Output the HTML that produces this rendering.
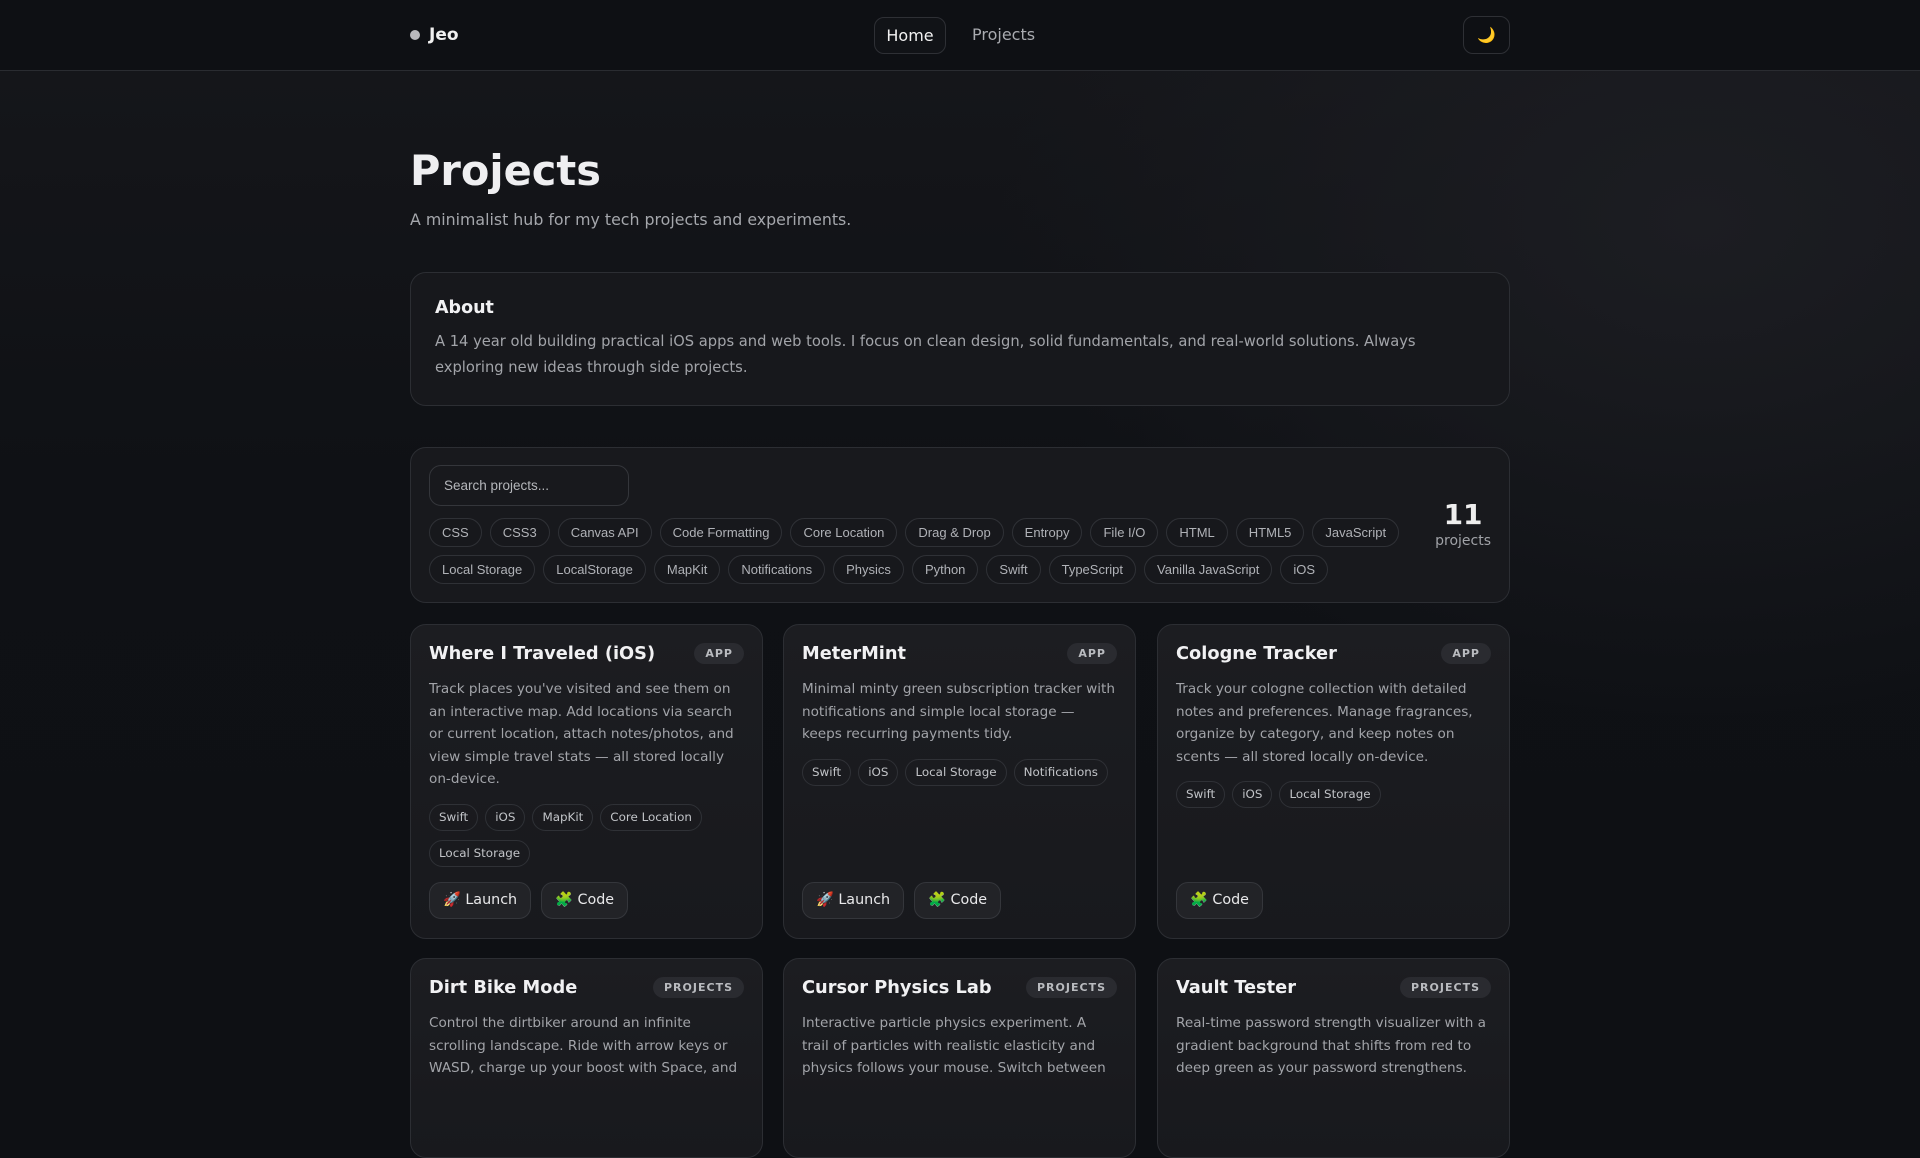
<!DOCTYPE html>
<html><head><meta charset="utf-8"><style>
*{box-sizing:border-box;margin:0;padding:0}
body{width:1920px;height:1080px;overflow:hidden;background:#0e1014;color:#e6e6e8;font-family:"DejaVu Sans","Liberation Sans",sans-serif;position:relative}
.bg{position:absolute;left:0;top:71px;width:1920px;height:1009px;background:radial-gradient(ellipse 700px 500px at 1700px 150px,#1c1d22 0%,rgba(20,21,25,0) 100%),linear-gradient(180deg,#15161a 0%,#0f1115 40%,#0e1014 100%)}
nav{position:absolute;left:0;top:0;width:1920px;height:71px;background:#0e1014;border-bottom:1px solid #2a2c31;z-index:2}
.logo{position:absolute;left:410px;top:25px;font-weight:bold;font-size:17px;color:#f0f0f0;display:flex;align-items:center}
.logo i{width:10px;height:10px;border-radius:50%;background:#b8b8bc;margin-right:9px;display:inline-block}
.home{position:absolute;left:874px;top:17px;width:72px;height:37px;border:1px solid #2e3035;border-radius:10px;font-size:16px;color:#f2f2f2;text-align:center;line-height:36px;background:#111317}
.proj{position:absolute;left:972px;top:25px;font-size:16px;color:#a9abb0}
.moon{position:absolute;left:1463px;top:16px;width:47px;height:38px;border:1px solid #2e3035;border-radius:10px;text-align:center;line-height:36px;font-size:15px;color:#f2b61d}
.wrap{position:absolute;left:410px;top:0;width:1100px;z-index:1}
h1{position:absolute;top:146px;left:0;font-size:41.5px;font-weight:bold;color:#efeff1}
.sub{position:absolute;top:210px;left:0;font-size:15.8px;color:#a5a7ac}
.about{position:absolute;top:272px;left:0;width:1100px;height:134px;border:1px solid #2c2e33;border-radius:16px;background:#17181c;padding:25px 24px}
.about h3{font-size:17.5px;font-weight:bold;color:#f1f1f3;margin-bottom:11px}
.about p{font-size:14.7px;line-height:26px;color:#a2a4a9}
.filter{position:absolute;top:447px;left:0;width:1100px;height:156px;border:1px solid #2c2e33;border-radius:16px;background:#18191d;padding:17px 18px}
.search{width:200px;height:41px;border:1px solid #34363b;border-radius:12px;font-family:"Liberation Sans",sans-serif;font-size:13.5px;color:#b5b7bb;padding:12px 14px;margin-bottom:12px}
.chips{width:1000px;display:flex;flex-wrap:wrap;gap:8px 8px}
.chip{height:29px;border:1px solid #2f3136;border-radius:15px;padding:0 12px;font-family:"Liberation Sans",sans-serif;font-size:13px;color:#b0b2b7;line-height:27px;background:#17181c}
.count{position:absolute;right:18px;top:52px;text-align:center}
.count b{display:block;font-size:28px;color:#eee;line-height:30px}
.count span{font-size:14px;color:#a0a2a7}
.card{position:absolute;width:353px;border:1px solid #2c2e33;border-radius:16px;background:linear-gradient(180deg,#1c1d21,#18191d);padding:18px 18px;overflow:hidden}
.card h2{font-size:17.8px;font-weight:bold;color:#f1f1f3;margin-top:0;height:24px}
.badge{position:absolute;right:18px;top:18px;height:21px;border-radius:11px;background:#2a2b30;color:#b9bbbf;font-size:11px;font-weight:bold;letter-spacing:1px;padding:0 11px;line-height:21px}
.card p{font-size:13.6px;line-height:22.5px;color:#a2a4a9;margin-top:11px}
.tags{display:flex;flex-wrap:wrap;gap:9px 7px;margin-top:13px}
.tag{height:27px;border:1px solid #2f3136;border-radius:14px;padding:0 9px;font-size:11.9px;color:#c2c4c8;line-height:25px;white-space:nowrap}
.btns{position:absolute;left:18px;top:257px;display:flex;gap:10px}
.btn{height:37px;border:1px solid #34363b;border-radius:12px;background:#222327;padding:0 13px;font-size:14.3px;color:#e8e8ea;line-height:35px}
</style></head><body>
<div class="bg"></div>
<nav>
<div class="logo"><i></i>Jeo</div>
<div class="home">Home</div>
<div class="proj">Projects</div>
<div class="moon">🌙</div>
</nav>
<div class="wrap">
<h1>Projects</h1>
<div class="sub">A minimalist hub for my tech projects and experiments.</div>
<div class="about"><h3>About</h3><p>A 14 year old building practical iOS apps and web tools. I focus on clean design, solid fundamentals, and real-world solutions. Always exploring new ideas through side projects.</p></div>
<div class="filter">
<div class="search">Search projects...</div>
<div class="chips">
<span class="chip">CSS</span><span class="chip">CSS3</span><span class="chip">Canvas API</span><span class="chip">Code Formatting</span><span class="chip">Core Location</span><span class="chip">Drag &amp; Drop</span><span class="chip">Entropy</span><span class="chip">File I/O</span><span class="chip">HTML</span><span class="chip">HTML5</span><span class="chip">JavaScript</span>
<span class="chip">Local Storage</span><span class="chip">LocalStorage</span><span class="chip">MapKit</span><span class="chip">Notifications</span><span class="chip">Physics</span><span class="chip">Python</span><span class="chip">Swift</span><span class="chip">TypeScript</span><span class="chip">Vanilla JavaScript</span><span class="chip">iOS</span>
</div>
<div class="count"><b>11</b><span>projects</span></div>
</div>

<div class="card" style="left:0;top:624px;height:315px"><h2>Where I Traveled (iOS)</h2><span class="badge">APP</span>
<p>Track places you've visited and see them on an interactive map. Add locations via search or current location, attach notes/photos, and view simple travel stats — all stored locally on-device.</p>
<div class="tags"><span class="tag">Swift</span><span class="tag">iOS</span><span class="tag">MapKit</span><span class="tag">Core Location</span><span class="tag">Local Storage</span></div>
<div class="btns"><span class="btn">🚀 Launch</span><span class="btn">🧩 Code</span></div></div>

<div class="card" style="left:373px;top:624px;height:315px"><h2>MeterMint</h2><span class="badge">APP</span>
<p>Minimal minty green subscription tracker with notifications and simple local storage — keeps recurring payments tidy.</p>
<div class="tags"><span class="tag">Swift</span><span class="tag">iOS</span><span class="tag">Local Storage</span><span class="tag">Notifications</span></div>
<div class="btns"><span class="btn">🚀 Launch</span><span class="btn">🧩 Code</span></div></div>

<div class="card" style="left:747px;top:624px;height:315px"><h2>Cologne Tracker</h2><span class="badge">APP</span>
<p>Track your cologne collection with detailed notes and preferences. Manage fragrances, organize by category, and keep notes on scents — all stored locally on-device.</p>
<div class="tags"><span class="tag">Swift</span><span class="tag">iOS</span><span class="tag">Local Storage</span></div>
<div class="btns"><span class="btn">🧩 Code</span></div></div>

<div class="card" style="left:0;top:958px;height:200px"><h2>Dirt Bike Mode</h2><span class="badge">PROJECTS</span>
<p>Control the dirtbiker around an infinite scrolling landscape. Ride with arrow keys or WASD, charge up your boost with Space, and</p></div>
<div class="card" style="left:373px;top:958px;height:200px"><h2>Cursor Physics Lab</h2><span class="badge">PROJECTS</span>
<p>Interactive particle physics experiment. A trail of particles with realistic elasticity and physics follows your mouse. Switch between</p></div>
<div class="card" style="left:747px;top:958px;height:200px"><h2>Vault Tester</h2><span class="badge">PROJECTS</span>
<p>Real-time password strength visualizer with a gradient background that shifts from red to deep green as your password strengthens.</p></div>
</div>
</body></html>
